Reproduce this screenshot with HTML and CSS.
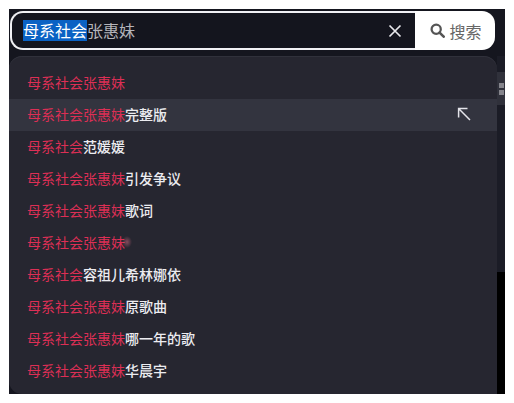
FILE: index.html
```html
<!DOCTYPE html>
<html lang="zh">
<head>
<meta charset="utf-8">
<title>搜索</title>
<link rel="stylesheet" href="styles.css">
</head>
<body>
<div class="stage">
  <form class="search">
    <div class="field">
      <span class="query"><span class="sel">母系社会</span>张惠妹</span>
      <svg class="clear" viewBox="0 0 14 14" width="14" height="14"><path d="M1.5 1.5 12.5 12.5M12.5 1.5 1.5 12.5" stroke="#e8e8ec" stroke-width="1.7" fill="none"/></svg>
    </div>
    <div class="btn">
      <svg class="mag" viewBox="0 0 16 16" width="15" height="15"><circle cx="6.6" cy="6.6" r="4.9" stroke="#555" stroke-width="2.4" fill="none"/><path d="M10.2 10.2 14.6 14.6" stroke="#555" stroke-width="2.8" stroke-linecap="round"/></svg>
      <span>搜索</span>
    </div>
  </form>
  <div class="below">
    <ul class="list">
      <li><em>母系社会张惠妹</em></li>
      <li class="hover"><em>母系社会张惠妹</em>完整版
        <svg class="arrow" viewBox="0 0 14 14" width="14" height="14"><path d="M1.6 10.5V1.6H10.5M1.8 1.8 13 13" fill="none" stroke="#e4e4ea" stroke-width="1.5"/></svg>
      </li>
      <li><em>母系社会</em>范媛媛</li>
      <li><em>母系社会张惠妹</em>引发争议</li>
      <li><em>母系社会张惠妹</em>歌词</li>
      <li><em>母系社会张惠妹</em><i class="smear"></i></li>
      <li><em>母系社会</em>容祖儿希林娜依</li>
      <li><em>母系社会张惠妹</em>原歌曲</li>
      <li><em>母系社会张惠妹</em>哪一年的歌</li>
      <li><em>母系社会张惠妹</em>华晨宇</li>
    </ul>
    <div class="side">
      <div class="grip"><b></b><b></b></div>
      <div class="side-black"></div>
    </div>
  </div>
</div>
</body>
</html>
```
FILE: styles.css
```css
* { box-sizing: border-box; }
html, body { margin: 0; height: 100%; background: #fff; }
body { padding: 9px; font-family: "Noto Sans CJK SC", "Liberation Sans", sans-serif; overflow: hidden; }
.stage { width: 496px; height: 385px; background: #15161f; display: flex; flex-direction: column; padding-top: 2px; }
.search { display: flex; height: 39px; margin: 0 10px 0 1px; flex: none; }
.field { flex: 1; display: flex; align-items: center; justify-content: space-between; background: #14151e; border: 2px solid #f1f1f5; border-right: 0; border-radius: 13px 0 0 13px; padding: 0 13px 0 11px; }
.query { font-size: 16px; line-height: 21px; color: #b4b4ba; }
.sel { background: #0a62c4; color: #fff; display: inline-block; }
.btn { width: 80px; background: #fff; border-radius: 0 13px 13px 0; display: flex; align-items: center; justify-content: center; gap: 4px; color: #666; font-size: 16px; padding-left: 2px; }
.below { flex: 1; display: flex; margin-top: 6px; min-height: 0; }
.list { width: 488px; margin: 0; padding: 11px 0 0; list-style: none; background: #262630; border-radius: 13px 13px 0 13px; box-shadow: inset 0 1px 0 #30313b; }
.list li { height: 32px; padding: 0 26px 2px 18px; display: flex; align-items: center; font-size: 14px; font-weight: 500; color: #ececf0; }
.list em { font-style: normal; font-weight: 400; color: #dc2f55; }
.hover { background: #33343f; }
.arrow { margin-left: auto; }
.smear { display: block; width: 10px; height: 12px; margin-left: -3px; background: radial-gradient(closest-side, rgba(224,110,135,.5), rgba(224,49,87,0)); }
.side { flex: 1; display: flex; flex-direction: column; background: #1b1c26; }
.grip { height: 33px; margin-top: 16px; background: #30313b; display: flex; flex-direction: column; align-items: center; justify-content: center; gap: 2px; }
.grip b { width: 5px; height: 5px; background: #85858c; }
.side-black { flex: none; height: 122px; margin-top: auto; background: #000; }
```
